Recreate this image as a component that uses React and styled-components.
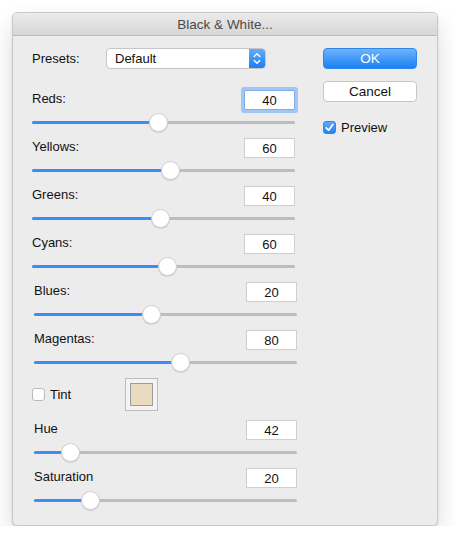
import React from 'react';
import styled, {createGlobalStyle} from 'styled-components';

const GlobalStyle = createGlobalStyle`
  html, body {
    margin: 0;
    padding: 0;
    background: #ffffff;
  }
  body {
    font-family: "Liberation Sans", Helvetica, Arial, sans-serif;
    font-size: 13px;
    color: #111;
  }
`

const Page = styled.div`
  padding: 12px 0 0 12px;
`

const Window = styled.div`
  width: 426px;
  height: 514px;
  box-sizing: border-box;
  background: #ececec;
  border: 1px solid #c9c9c9;
  border-radius: 5px;
  box-shadow: 0 12px 24px rgba(0, 0, 0, 0.14), 0 1px 2px rgba(0, 0, 0, 0.12);
  overflow: hidden;
  display: flex;
  flex-direction: column;
`

const TitleBar = styled.div`
  height: 22px;
  flex: none;
  display: flex;
  align-items: center;
  justify-content: center;
  background: linear-gradient(#ebebeb, #d6d6d6);
  border-bottom: 1px solid #bdbdbd;
  color: #4a4a4a;
  font-size: 13.5px;
`

const Body = styled.div`
  display: grid;
  grid-template-columns: 266px 94px;
  column-gap: 26px;
  padding: 12px 0 0 18px;
`

const LeftColumn = styled.div`
  display: flex;
  flex-direction: column;
  gap: 6px;
`

const RightColumn = styled.div`
  display: flex;
  flex-direction: column;
  align-items: stretch;
`

const PresetsRow = styled.div`
  display: flex;
  align-items: center;
  height: 21px;
  margin-bottom: 15px;
  padding-left: 1px;
`

const PresetsLabel = styled.span`
  width: 74px;
`

const Select = styled.div`
  width: 160px;
  height: 21px;
  box-sizing: border-box;
  display: flex;
  align-items: stretch;
  background: #fff;
  border: 1px solid #c6c6c6;
  border-radius: 4px;
  overflow: hidden;
`

const SelectValue = styled.span`
  flex: 1;
  display: flex;
  align-items: center;
  padding-left: 8px;
`

const Stepper = styled.span`
  width: 16px;
  display: flex;
  align-items: center;
  justify-content: center;
  background: linear-gradient(#64acfb, #1b7ff4);
`

const Block = styled.div`
  display: flex;
  flex-direction: column;
  margin-left: ${p => p.$shift}px;
  width: 263px;
`

const Header = styled.div`
  height: 20px;
  display: flex;
  align-items: center;
  justify-content: space-between;
`

const Label = styled.span`
  margin-top: -3px;
`

const NumberBox = styled.div`
  width: 51px;
  height: 20px;
  box-sizing: border-box;
  background: #fff;
  border: 1px solid ${p => (p.$focused ? '#7eaee9' : '#cfcfcf')};
  box-shadow: ${p => (p.$focused ? '0 0 0 3px #a3c7f3' : 'none')};
  border-radius: ${p => (p.$focused ? '1px' : '0')};
  display: flex;
  align-items: center;
  justify-content: center;
  padding-top: 1px;
  font-size: 13px;
  color: #111;
`

const SliderArea = styled.div`
  position: relative;
  height: 20px;
  margin-top: 2px;
  display: flex;
  align-items: center;
`

const Track = styled.div`
  position: relative;
  width: 100%;
  height: 3px;
  border-radius: 2px;
  background: #bdbdbd;
`

const Fill = styled.div`
  height: 100%;
  border-radius: 2px;
  background: #3a8ef6;
`

const Thumb = styled.div`
  position: absolute;
  top: 50%;
  width: 17px;
  height: 17px;
  margin: -9px 0 0 -9px;
  border-radius: 50%;
  background: #fff;
  border: 1px solid #d0d0d0;
  box-shadow: 0 1px 1px rgba(0, 0, 0, 0.12);
`

const TintRow = styled.div`
  display: flex;
  align-items: center;
  height: 33px;
  margin-bottom: 3px;
  padding-left: 1px;
`

const TintToggle = styled.label`
  width: 93px;
  display: flex;
  align-items: center;
  gap: 5px;
`

const CheckBox = styled.span`
  width: 13px;
  height: 13px;
  box-sizing: border-box;
  border-radius: 3px;
  display: flex;
  align-items: center;
  justify-content: center;
  background: ${p => (p.$checked ? 'linear-gradient(#5ea8fb, #2284f5)' : '#fff')};
  border: 1px solid ${p => (p.$checked ? '#2f86ee' : '#b9b9b9')};
`

const Swatch = styled.div`
  width: 33px;
  height: 33px;
  box-sizing: border-box;
  background: #f3f3f3;
  border: 1px solid #bdbdbd;
  padding: 4px;
`

const SwatchColor = styled.div`
  width: 100%;
  height: 100%;
  box-sizing: border-box;
  background: #e8dbbf;
  border: 1px solid #9c9c9c;
`

const Button = styled.div`
  height: 21px;
  box-sizing: border-box;
  display: flex;
  align-items: center;
  justify-content: center;
  border-radius: 4px;
  font-size: 13.5px;
  ${p =>
    p.$primary
      ? `
    background: linear-gradient(#6db4fb, #1a80f5);
    border: 1px solid #2f86ee;
    color: #fff;
  `
      : `
    background: #fff;
    border: 1px solid #c7c7c7;
    color: #111;
  `}
`

const ButtonStack = styled.div`
  display: flex;
  flex-direction: column;
  gap: 12px;
  margin-bottom: 19px;
`

const PreviewRow = styled.label`
  display: flex;
  align-items: center;
  gap: 5px;
  height: 14px;
  margin-top: -1px;
`

const sliders = [
  {name: 'Reds:', value: 40, pos: 0.48, shift: 1, focused: true},
  {name: 'Yellows:', value: 60, pos: 0.525, shift: 1},
  {name: 'Greens:', value: 40, pos: 0.485, shift: 1},
  {name: 'Cyans:', value: 60, pos: 0.515, shift: 1},
  {name: 'Blues:', value: 20, pos: 0.445, shift: 3},
  {name: 'Magentas:', value: 80, pos: 0.555, shift: 3},
];

const tintSliders = [
  {name: 'Hue', value: 42, pos: 0.137, shift: 3},
  {name: 'Saturation', value: 20, pos: 0.214, shift: 3},
];

const Check = () => (
  <svg width="9" height="9" viewBox="0 0 9 9">
    <path d="M1.2 4.8 L3.6 7.2 L7.8 1.6" fill="none" stroke="#fff" strokeWidth="1.7" strokeLinecap="round" strokeLinejoin="round" />
  </svg>
)

const Chevrons = () => (
  <svg width="8" height="13" viewBox="0 0 8 13">
    <path d="M1.2 4.6 L4 1.8 L6.8 4.6 M1.2 8.4 L4 11.2 L6.8 8.4" fill="none" stroke="#fff" strokeWidth="1.4" strokeLinecap="round" strokeLinejoin="round" />
  </svg>
)

const SliderBlock = ({name, value, pos, shift, focused}) => (
  <Block $shift={shift}>
    <Header>
      <Label>{name}</Label>
      <NumberBox $focused={focused}>{value}</NumberBox>
    </Header>
    <SliderArea>
      <Track>
        <Fill style={{width: `${pos * 100}%`}} />
        <Thumb style={{left: `${pos * 100}%`}} />
      </Track>
    </SliderArea>
  </Block>
)

const App = () => {
  return (
    <Page>
      <GlobalStyle />
      <Window>
        <TitleBar>Black &amp; White...</TitleBar>
        <Body>
          <LeftColumn>
            <PresetsRow>
              <PresetsLabel>Presets:</PresetsLabel>
              <Select>
                <SelectValue>Default</SelectValue>
                <Stepper><Chevrons /></Stepper>
              </Select>
            </PresetsRow>
            {sliders.map(s => <SliderBlock key={s.name} {...s} />)}
            <TintRow>
              <TintToggle>
                <CheckBox />
                Tint
              </TintToggle>
              <Swatch><SwatchColor /></Swatch>
            </TintRow>
            {tintSliders.map(s => <SliderBlock key={s.name} {...s} />)}
          </LeftColumn>
          <RightColumn>
            <ButtonStack>
              <Button $primary>OK</Button>
              <Button>Cancel</Button>
            </ButtonStack>
            <PreviewRow>
              <CheckBox $checked><Check /></CheckBox>
              Preview
            </PreviewRow>
          </RightColumn>
        </Body>
      </Window>
    </Page>
  )
}

export default App;
